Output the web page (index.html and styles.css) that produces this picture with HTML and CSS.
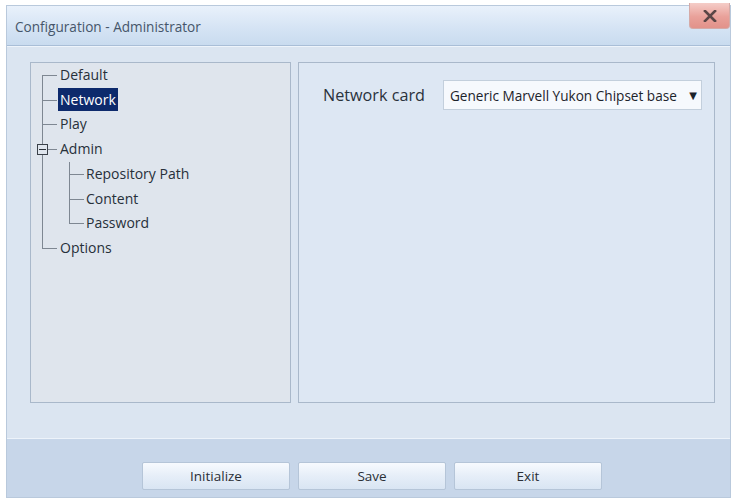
FILE: index.html
```html
<!DOCTYPE html>
<html lang="en">
<head>
    <meta charset="UTF-8">
    <title>Configuration - Administrator</title>
    <link rel="stylesheet" href="styles.css">
</head>
<body>
    <div class="window">
        <div class="titlebar">
            <span class="title">Configuration - Administrator</span>
            <button class="close" title="Close">
                <svg width="14" height="12" viewBox="0 0 14 12"><path d="M2 1 L12 11 M12 1 L2 11" stroke="#5b4646" stroke-width="2.6" stroke-linecap="square"/></svg>
            </button>
        </div>
        <div class="content">
            <div class="panel tree-panel">
                <ul class="tree">
                    <li><span class="label">Default</span></li>
                    <li><span class="label selected">Network</span></li>
                    <li><span class="label">Play</span></li>
                    <li class="open">
                        <span class="toggle"></span>
                        <span class="label">Admin</span>
                        <ul>
                            <li><span class="label">Repository Path</span></li>
                            <li><span class="label">Content</span></li>
                            <li><span class="label">Password</span></li>
                        </ul>
                    </li>
                    <li><span class="label">Options</span></li>
                </ul>
            </div>
            <div class="panel settings">
                <div class="field">
                    <label for="card">Network card</label>
                    <div class="select" id="card">
                        <span>Generic Marvell Yukon Chipset base</span>
                        <span class="arrow">&#9660;</span>
                    </div>
                </div>
            </div>
        </div>
        <div class="footer">
            <button class="btn">Initialize</button>
            <button class="btn">Save</button>
            <button class="btn">Exit</button>
        </div>
    </div>
</body>
</html>
```

FILE: styles.css
```css
body {
    margin: 0;
    background: #ffffff;
    font-family: "Open Sans", "DejaVu Sans", sans-serif;
    color: #1f2730;
}
.window {
    width: 725px;
    height: 493px;
    margin: 5px 0 0 6px;
    border: 1px solid #b9c9dc;
    box-sizing: border-box;
    display: flex;
    flex-direction: column;
    background: #dbe5f1;
}
.titlebar {
    height: 39px;
    flex-shrink: 0;
    display: flex;
    align-items: center;
    justify-content: space-between;
    padding-left: 8px;
    background: linear-gradient(#e9f1fb, #d4e3f4 60%, #c9dbef);
    border-bottom: 1px solid #a9bed7;
}
.title {
    font-size: 13.6px;
    color: #46566a;
    margin-top: 2px;
}
.close {
    align-self: flex-start;
    width: 41px;
    height: 26px;
    margin: -3px 0 0;
    border: 1px solid #d5aaa7;
    border-top: none;
    border-radius: 0 0 4px 4px;
    background: linear-gradient(#f5cdc8, #e9a19a 55%, #e2928a);
    display: flex;
    align-items: center;
    justify-content: center;
    padding: 0;
}
.content {
    flex: 1;
    display: flex;
    gap: 7px;
    padding: 15px 15px 35px 23px;
    border-top: 1px solid #eef4fb;
}
.panel {
    border: 1px solid #a9b8ca;
    box-sizing: border-box;
}
.tree-panel {
    width: 261px;
    background: #dfe5ed;
    padding: 0 0 0 11px;
}
.settings {
    flex: 1;
    background: #dde7f3;
    padding: 17px 0 0 24px;
}
.tree,
.tree ul {
    list-style: none;
    margin: 0;
    padding: 0;
}
.tree {
    font-size: 14px;
}
.tree li {
    position: relative;
    padding-left: 18px;
    line-height: 24.7px;
}
.tree ul {
    margin-left: 9px;
}
.tree ul li {
    padding-left: 17px;
}
.tree li::before {
    content: '';
    position: absolute;
    left: 0;
    top: 12px;
    width: 15px;
    border-top: 1px solid #7e8792;
}
.tree li::after {
    content: '';
    position: absolute;
    left: 0;
    top: 0;
    bottom: 0;
    border-left: 1px solid #7e8792;
}
.tree > li:first-child::after {
    top: 12px;
}
.tree li:last-child::after {
    bottom: auto;
    height: 13px;
}
.label {
    padding: 2px 2px;
    margin-left: -2px;
    color: #27303a;
}
.label.selected {
    background: #0d2a6c;
    color: #ffffff;
}
.toggle {
    position: absolute;
    left: -5px;
    top: 7px;
    width: 9px;
    height: 9px;
    border: 1px solid #3a4048;
    background: #dfe5ed;
    z-index: 1;
}
.toggle::before {
    content: '';
    position: absolute;
    left: 1px;
    right: 1px;
    top: 4px;
    border-top: 1px solid #2a3038;
}
.field {
    display: flex;
    align-items: center;
    gap: 18px;
}
.field label {
    font-size: 16.2px;
    color: #2a323c;
}
.select {
    width: 259px;
    height: 30px;
    box-sizing: border-box;
    border: 1px solid #c3cfdc;
    background: #f6f9fd;
    display: flex;
    align-items: center;
    justify-content: space-between;
    padding: 0 4px 0 6px;
    font-size: 13.6px;
    color: #1c232b;
    white-space: nowrap;
    overflow: hidden;
}
.arrow {
    font-size: 10px;
    color: #1c232b;
    margin-left: 4px;
}
.footer {
    height: 59px;
    flex-shrink: 0;
    display: flex;
    justify-content: center;
    align-items: flex-start;
    gap: 8px;
    padding: 23px 0 0 7px;
    box-sizing: border-box;
    background: #c7d6e9;
    border-top: 1px solid #edf3fa;
}
.btn {
    width: 148px;
    height: 28px;
    border: 1px solid #b5c5d8;
    border-radius: 2px;
    background: linear-gradient(#f7fafe, #e6eef8 50%, #d9e5f3);
    font-family: "Open Sans", "DejaVu Sans", sans-serif;
    font-size: 13.5px;
    color: #2a2f36;
}
```
